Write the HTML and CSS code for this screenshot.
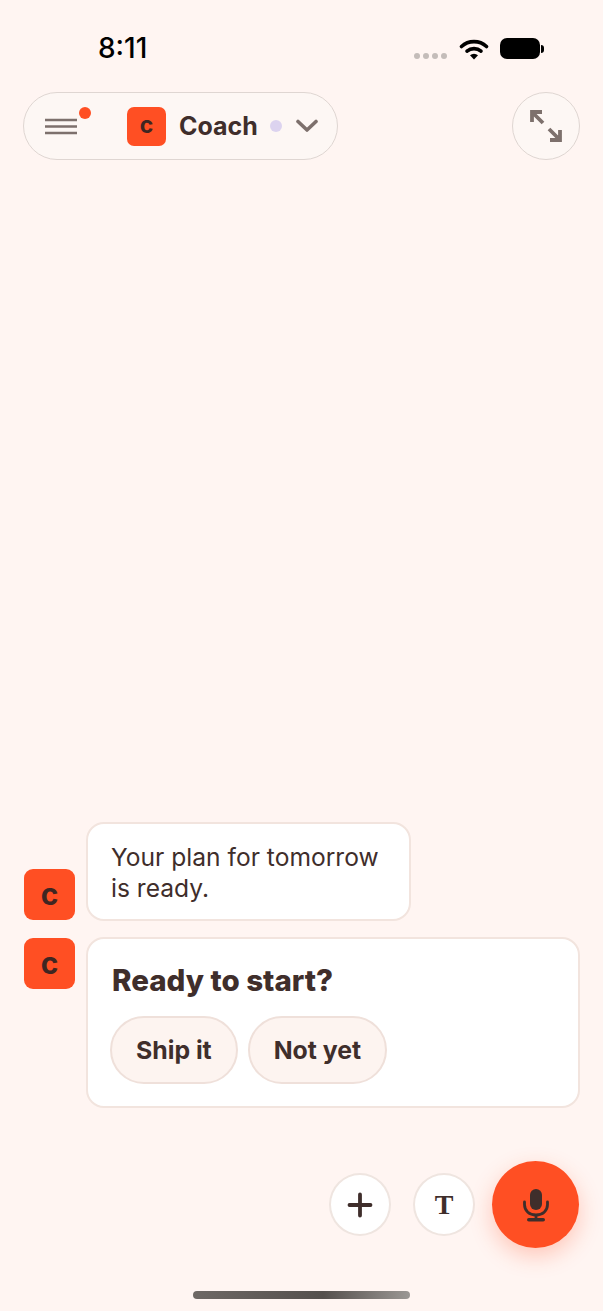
FILE: index.html
```html
<!DOCTYPE html>
<html lang="en">
<head>
  <meta charset="UTF-8">
  <title>Coach</title>
  <link rel="stylesheet" href="styles.css">
</head>
<body>
<div class="screen">
  <div class="statusBar">
    <span class="time">8:11</span>
    <div class="statusIcons">
      <div class="signal"><i></i><i></i><i></i><i></i></div>
      <svg class="wifi" width="30" height="22" viewBox="0 0 30 22">
        <path d="M2.500 8.500C9.500 2 20.500 2 27.500 8.500" fill="none" stroke="#000" stroke-width="3.600" stroke-linecap="round"/>
        <path d="M8 13.200C12 9.800 18 9.800 22 13.200" fill="none" stroke="#000" stroke-width="3.600" stroke-linecap="round"/>
        <path d="M11 17.200C13.500 15.200 16.500 15.200 19 17.200L15 21.500Z" fill="#000"/>
      </svg>
      <div class="battery"><div class="batteryBody"></div><div class="batteryCap"></div></div>
    </div>
  </div>

  <div class="topBar">
    <div class="pill">
      <div class="menu">
        <svg width="34" height="18" viewBox="0 0 34 18">
          <path d="M1 3H33M1 9.500H33M1 16H33" stroke="#7d706c" stroke-width="2.600"/>
        </svg>
        <span class="menuDot"></span>
      </div>
      <div class="logo small">c</div>
      <span class="pillName">Coach</span>
      <span class="statusDot"></span>
      <svg class="chevron" width="24" height="14" viewBox="0 0 24 14">
        <path d="M3 2.500L12 11L21 2.500" fill="none" stroke="#7d706c" stroke-width="3.600" stroke-linecap="round" stroke-linejoin="round"/>
      </svg>
    </div>
    <button class="expand">
      <svg width="34" height="34" viewBox="0 0 34 34">
        <path d="M3 13V3H13M3 3L14 14M31 21V31H21M31 31L20 20" fill="none" stroke="#7d706c" stroke-width="3.800"/>
      </svg>
    </button>
  </div>

  <div class="chat">
    <div class="message end">
      <div class="logo">c</div>
      <div class="bubble short">Your plan for tomorrow is ready.</div>
    </div>
    <div class="message">
      <div class="logo second">c</div>
      <div class="bubble card">
        <div class="question">Ready to start?</div>
        <div class="choices">
          <button class="choice">Ship it</button>
          <button class="choice">Not yet</button>
        </div>
      </div>
    </div>
  </div>

  <div class="actions">
    <button class="round">
      <svg width="26" height="26" viewBox="0 0 26 26">
        <path d="M13 2.500V23.500M2.500 13H23.500" stroke="#3f2e2b" stroke-width="3.800" stroke-linecap="round"/>
      </svg>
    </button>
    <button class="round serif">T</button>
    <button class="mic">
      <svg width="28" height="34" viewBox="0 0 28 34">
        <rect x="8" y="1" width="12" height="21" rx="6" fill="#3f2e2b"/>
        <path d="M2.500 14V16.500C2.500 23 7.500 27 14 27C20.500 27 25.500 23 25.500 16.500V14" fill="none" stroke="#3f2e2b" stroke-width="2.800" stroke-linecap="round"/>
        <path d="M14 27V31" stroke="#3f2e2b" stroke-width="2.800"/>
        <rect x="5" y="30" width="18" height="3.600" rx="1.800" fill="#3f2e2b"/>
      </svg>
    </button>
  </div>

  <div class="homeBar"></div>
</div>
</body>
</html>
```

FILE: styles.css
```css
* {
  box-sizing: border-box;
}

body {
  margin: 0;
  background-color: #fff5f2;
  font-family: "Inter", "Liberation Sans", sans-serif;
  color: #3f2e2b;
}

button {
  font-family: inherit;
  color: inherit;
  padding: 0;
}

.screen {
  width: 603px;
  height: 1311px;
  display: flex;
  flex-direction: column;
  overflow: hidden;
}

.statusBar {
  height: 92px;
  padding: 33px 59px 0 98px;
  display: flex;
  justify-content: space-between;
  align-items: flex-start;
}

.time {
  font-size: 28px;
  line-height: 30px;
  font-weight: 500;
  color: #000;
}

.statusIcons {
  display: flex;
  align-items: flex-start;
}

.signal {
  display: flex;
  gap: 3px;
  margin: 20px 0 0 0;
}

.signal i {
  width: 6px;
  height: 6px;
  border-radius: 50%;
  background-color: #c4bcb9;
}

.wifi {
  margin: 5px 0 0 12px;
}

.battery {
  display: flex;
  align-items: center;
  margin: 5px 0 0 11px;
}

.batteryBody {
  width: 40px;
  height: 21px;
  border-radius: 7px;
  background-color: #000;
}

.batteryCap {
  width: 3px;
  height: 8px;
  margin-left: 1px;
  border-radius: 0 3px 3px 0;
  background-color: #000;
}

.topBar {
  padding: 0 23px;
  display: flex;
  justify-content: space-between;
}

.pill {
  width: 315px;
  height: 68px;
  padding-left: 20px;
  display: flex;
  align-items: center;
  border: 1px solid #dfd6d2;
  border-radius: 34px;
  background-color: #fdf7f4;
}

.menu {
  position: relative;
  width: 34px;
  height: 18px;
  margin-right: 49px;
}

.menu svg {
  display: block;
}

.menuDot {
  position: absolute;
  top: -10px;
  right: -13px;
  width: 12px;
  height: 12px;
  border-radius: 50%;
  background-color: #ff4f23;
}

.logo {
  flex: none;
  width: 51px;
  height: 51px;
  border-radius: 9px;
  background-color: #ff4f23;
  color: #3f2622;
  font-size: 30px;
  font-weight: 700;
  line-height: 50px;
  text-align: center;
}

.logo.second {
  margin-top: 1px;
}

.logo.small {
  width: 39px;
  height: 39px;
  border-radius: 7px;
  font-size: 23px;
  line-height: 37px;
}

.pillName {
  margin-left: 13px;
  font-size: 25px;
  font-weight: 700;
}

.statusDot {
  width: 12px;
  height: 12px;
  margin-left: 12px;
  border-radius: 50%;
  background-color: #dcd3ef;
}

.chevron {
  margin-left: 13px;
}

.expand {
  width: 68px;
  height: 68px;
  display: flex;
  align-items: center;
  justify-content: center;
  border: 1px solid #dfd6d2;
  border-radius: 50%;
  background-color: #fdf7f4;
}

.chat {
  flex: 1;
  padding: 0 23px 0 24px;
  display: flex;
  flex-direction: column;
  justify-content: flex-end;
  gap: 16px;
}

.message {
  display: flex;
  align-items: flex-start;
  gap: 11px;
}

.message.end {
  align-items: flex-end;
}

.bubble {
  border: 2px solid #f2e4de;
  border-radius: 18px;
  background-color: #fff;
}

.message.end .logo {
  margin-bottom: 1px;
}

.bubble.short {
  width: 325px;
  height: 99px;
  padding: 18px 23px 0;
  font-size: 24.600px;
  line-height: 31px;
}

.bubble.card {
  flex: 1;
  height: 171px;
  padding: 23px 22px 0;
}

.question {
  margin-left: 2px;
  font-size: 29.500px;
  line-height: 36px;
  font-weight: 800;
}

.choices {
  margin-top: 18px;
  display: flex;
  gap: 10px;
}

.choice {
  height: 68px;
  padding: 0 24px;
  border: 2px solid #efe0da;
  border-radius: 34px;
  background-color: #fdf4f0;
  font-size: 24.800px;
  font-weight: 700;
}

.actions {
  height: 140px;
  margin-top: 53px;
  padding: 0 24px 0 329px;
  display: flex;
  align-items: flex-start;
}

.round {
  width: 62px;
  height: 63px;
  margin-top: 12px;
  margin-right: 22px;
  display: flex;
  align-items: center;
  justify-content: center;
  border: 2px solid #efe5e0;
  border-radius: 50%;
  background-color: #fff;
}

.round.serif {
  margin-right: 17px;
  font-family: "Liberation Serif", serif;
  font-size: 28px;
  font-weight: 700;
}

.mic {
  width: 87px;
  height: 87px;
  display: flex;
  align-items: center;
  justify-content: center;
  border: none;
  border-radius: 50%;
  background-color: #ff4f23;
  box-shadow: 0 8px 22px rgba(255, 79, 35, 0.28);
}

.homeBar {
  width: 217px;
  height: 8px;
  margin: -10px auto 12px;
  border-radius: 4px;
  background: linear-gradient(90deg, #6e6865, #55504d 60%, #9b9794);
}
```
